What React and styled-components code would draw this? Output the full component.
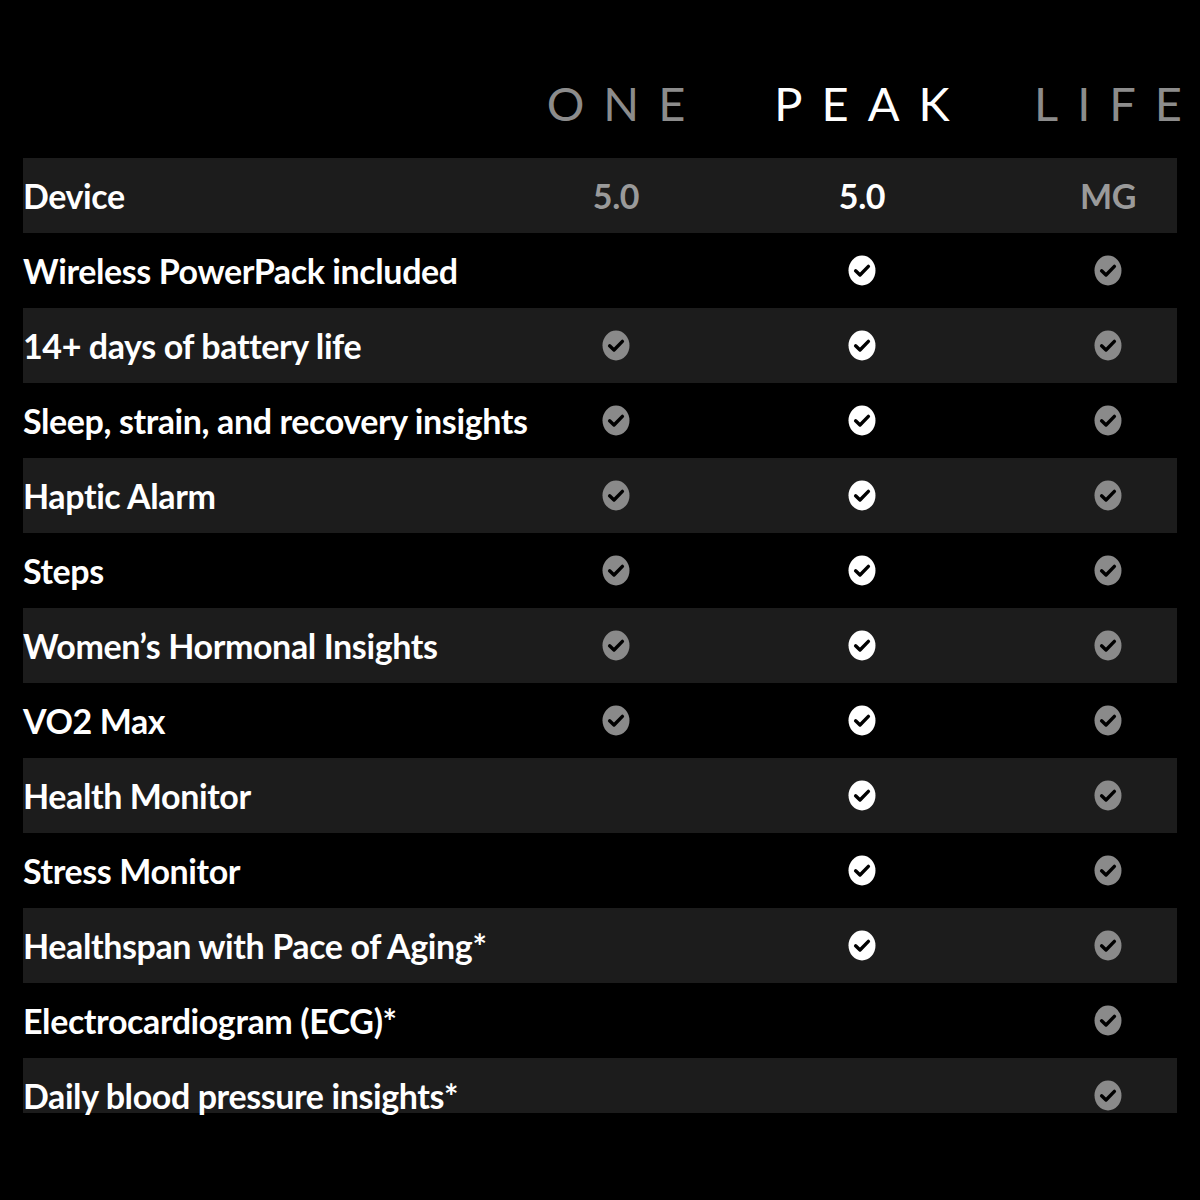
import React from "react";
import styled, { createGlobalStyle } from "styled-components";

const Global = createGlobalStyle`
  html, body { margin: 0; padding: 0; background: #000; }
  body { font-family: "Lato", "Noto Sans", sans-serif; }
`;

const Page = styled.div`
  width: 1200px;
  height: 1200px;
  background: #000;
  padding: 0 23px;
  box-sizing: border-box;
`;

const grid = `
  display: grid;
  grid-template-columns: minmax(0, 1fr) 100px 100px 100px;
  column-gap: 146px;
  padding-right: 19px;
  align-items: center;
`;

const Header = styled.div`
  ${grid}
  height: 158px;
  align-items: end;
  padding-bottom: 32px;
  box-sizing: border-box;
`;

const Brand = styled.div`
  justify-self: center;
  white-space: nowrap;
  font-family: "Lato", sans-serif;
  font-weight: 400;
  font-size: 47px;
  line-height: 46px;
  letter-spacing: 19px;
  margin-right: -19px;
  color: ${(p) => (p.$active ? "#ffffff" : "#8c8c8c")};
`;

const Table = styled.div`
  display: flex;
  flex-direction: column;
`;

const Row = styled.div`
  ${grid}
  height: 75px;
  background: ${(p) =>
    p.$short
      ? "linear-gradient(#1c1c1c 0, #1c1c1c 55px, transparent 55px)"
      : p.$shade
      ? "#1c1c1c"
      : "#000"};
`;

const Label = styled.div`
  font-size: 34px;
  font-weight: 700;
  color: #fff;
  letter-spacing: -0.4px;
  white-space: nowrap;
`;

const Cell = styled.div`
  display: flex;
  justify-content: center;
  align-items: center;
  font-size: 34px;
  font-weight: 700;
  letter-spacing: -0.4px;
  color: ${(p) => (p.$active ? "#ffffff" : "#9a9a9a")};
`;

const Check = ({ active }) => (
  <svg width="30" height="31" viewBox="0 0 30 31">
    <ellipse cx="15" cy="15.5" rx="13.5" ry="15" fill={active ? "#ffffff" : "#8a8a8a"} />
    <path
      d="M8.6 15.8 L13 20 L21.4 11.4"
      fill="none"
      stroke="#000"
      strokeWidth="3.4"
      strokeLinecap="round"
      strokeLinejoin="round"
    />
  </svg>
);

const rows = [
  ["Wireless PowerPack included", 0, 1, 1],
  ["14+ days of battery life", 1, 1, 1],
  ["Sleep, strain, and recovery insights", 1, 1, 1],
  ["Haptic Alarm", 1, 1, 1],
  ["Steps", 1, 1, 1],
  ["Women’s Hormonal Insights", 1, 1, 1],
  ["VO2 Max", 1, 1, 1],
  ["Health Monitor", 0, 1, 1],
  ["Stress Monitor", 0, 1, 1],
  ["Healthspan with Pace of Aging*", 0, 1, 1],
  ["Electrocardiogram (ECG)*", 0, 0, 1],
  ["Daily blood pressure insights*", 0, 0, 1],
];

export default function App() {
  return (
    <Page>
      <Global />
      <Header>
        <div />
        <Brand>ONE</Brand>
        <Brand $active>PEAK</Brand>
        <Brand>LIFE</Brand>
      </Header>
      <Table>
        <Row $shade>
          <Label>Device</Label>
          <Cell>5.0</Cell>
          <Cell $active>5.0</Cell>
          <Cell>MG</Cell>
        </Row>
        {rows.map(([label, a, b, c], i) => (
          <Row
            key={label}
            $shade={i % 2 === 1}
            $short={i === rows.length - 1}
          >
            <Label>{label}</Label>
            <Cell>{a ? <Check /> : null}</Cell>
            <Cell>{b ? <Check active /> : null}</Cell>
            <Cell>{c ? <Check /> : null}</Cell>
          </Row>
        ))}
      </Table>
    </Page>
  );
}
